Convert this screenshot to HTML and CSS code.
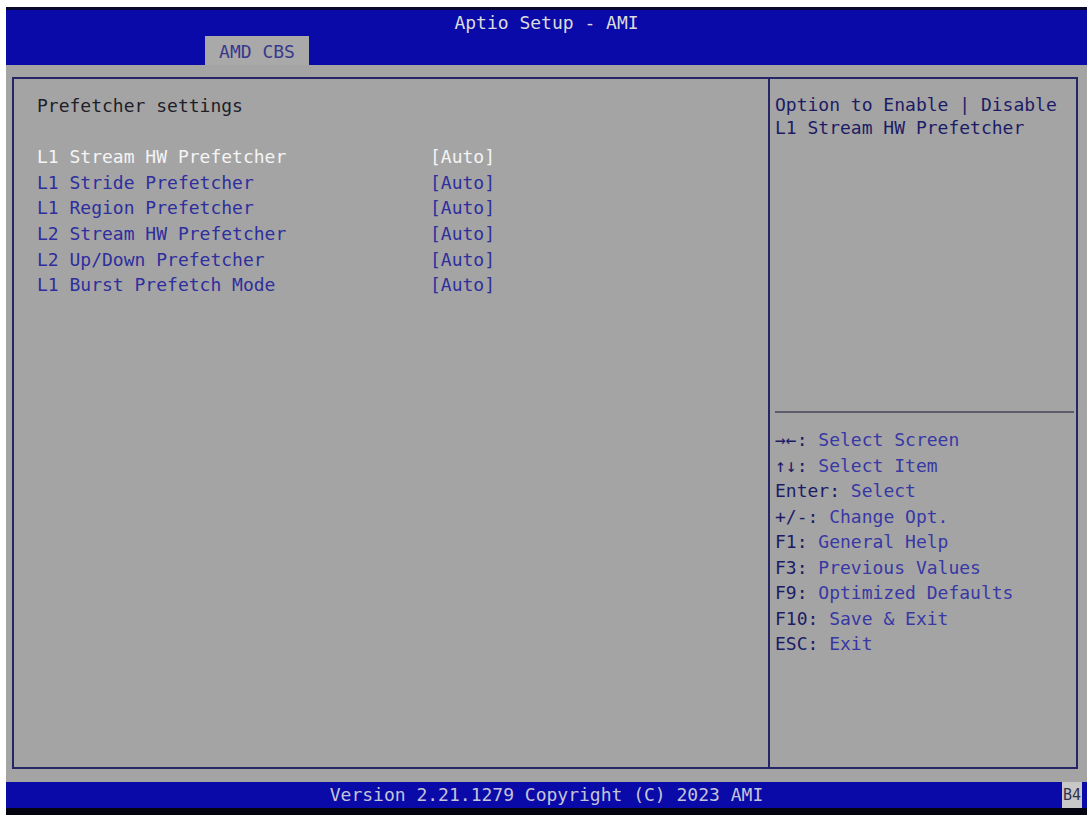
FILE: index.html
```html
<html>
<head>
    <link rel="stylesheet" href="styles.css">
</head>
<body>
    <div class="screen">
        <div class="topbar">
            <div class="title">Aptio Setup - AMI</div>
            <div class="tabs">
                <div class="tab">AMD CBS</div>
            </div>
        </div>

        <div class="main">
            <div class="panel">
                <div class="settings">
                    <div class="heading">Prefetcher settings</div>
                    <div class="blank"></div>
                    <div class="item selected"><span class="label">L1 Stream HW Prefetcher</span><span class="value">[Auto]</span></div>
                    <div class="item"><span class="label">L1 Stride Prefetcher</span><span class="value">[Auto]</span></div>
                    <div class="item"><span class="label">L1 Region Prefetcher</span><span class="value">[Auto]</span></div>
                    <div class="item"><span class="label">L2 Stream HW Prefetcher</span><span class="value">[Auto]</span></div>
                    <div class="item"><span class="label">L2 Up/Down Prefetcher</span><span class="value">[Auto]</span></div>
                    <div class="item"><span class="label">L1 Burst Prefetch Mode</span><span class="value">[Auto]</span></div>
                </div>

                <div class="help">
                    <div class="help-text">
                        <div>Option to Enable | Disable</div>
                        <div>L1 Stream HW Prefetcher</div>
                    </div>
                    <div class="divider"></div>
                    <div class="keys">
                        <div><span class="key">&rarr;&larr;:</span> Select Screen</div>
                        <div><span class="key">&uarr;&darr;:</span> Select Item</div>
                        <div><span class="key">Enter:</span> Select</div>
                        <div><span class="key">+/-:</span> Change Opt.</div>
                        <div><span class="key">F1:</span> General Help</div>
                        <div><span class="key">F3:</span> Previous Values</div>
                        <div><span class="key">F9:</span> Optimized Defaults</div>
                        <div><span class="key">F10:</span> Save &amp; Exit</div>
                        <div><span class="key">ESC:</span> Exit</div>
                    </div>
                </div>
            </div>
        </div>

        <div class="footer">
            <div class="version">Version 2.21.1279 Copyright (C) 2023 AMI</div>
            <div class="code">B4</div>
        </div>
    </div>
</body>
</html>
```

FILE: styles.css
```css
body {
    margin: 0;
    background-color: #fff;
    font-family: "DejaVu Sans Mono", "Liberation Mono", monospace;
    font-size: 18px;
}

.screen {
    margin: 7px 0 0 6px;
    height: 808px;
    background-color: #a4a4a4;
    display: flex;
    flex-direction: column;
}

/* Header with title and the tab strip */
.topbar {
    height: 55px;
    background-color: #0a0aa8;
    border-top: 3px solid #08082e;
    display: flex;
    flex-direction: column;
}
.title {
    height: 26px;
    line-height: 26px;
    text-align: center;
    color: #dcdcdc;
}
.tabs {
    flex: 1;
    display: flex;
    align-items: flex-end;
    padding-left: 199px;
}
.tab {
    width: 104px;
    height: 29px;
    line-height: 32px;
    text-align: center;
    background-color: #a9a9a9;
    color: #38388c;
}

.main {
    padding: 12px 9px 0 6px;
}
.panel {
    height: 688px;
    border: 2px solid #262666;
    display: grid;
    grid-template-columns: 754px auto;
}

/* Left side: list of settings */
.settings {
    padding: 14px 0 0 23px;
    line-height: 25.6px;
}
.heading {
    color: #1e1e2a;
}
.blank {
    height: 25.6px;
}
.item {
    display: grid;
    grid-template-columns: 393px auto;
    color: #2e2e9e;
}
.item.selected {
    color: #f4f4f4;
}

/* Right side: help text and key list */
.help {
    border-left: 2px solid #262666;
    display: flex;
    flex-direction: column;
}
.help-text {
    height: 332px;
    padding: 14px 0 0 5px;
    box-sizing: border-box;
    line-height: 23px;
    color: #1c1c66;
}
.divider {
    height: 2px;
    margin: 0 2px 0 5px;
    background-color: #5c5c6c;
}
.keys {
    padding: 14px 0 0 5px;
    line-height: 25.5px;
    color: #3838a4;
}
.key {
    color: #1c1c66;
}

.footer {
    margin-top: 13px;
    height: 26px;
    background-color: #0a0aa8;
    border-bottom: 7px solid #040410;
    display: flex;
    position: relative;
}
.version {
    flex: 1;
    text-align: center;
    line-height: 26px;
    color: #c4c4d8;
}
.code {
    position: absolute;
    right: 5px;
    top: 0;
    width: 20px;
    height: 26px;
    line-height: 26px;
    text-align: center;
    font-size: 15px;
    background-color: #c8c8c8;
    color: #303050;
}
```
